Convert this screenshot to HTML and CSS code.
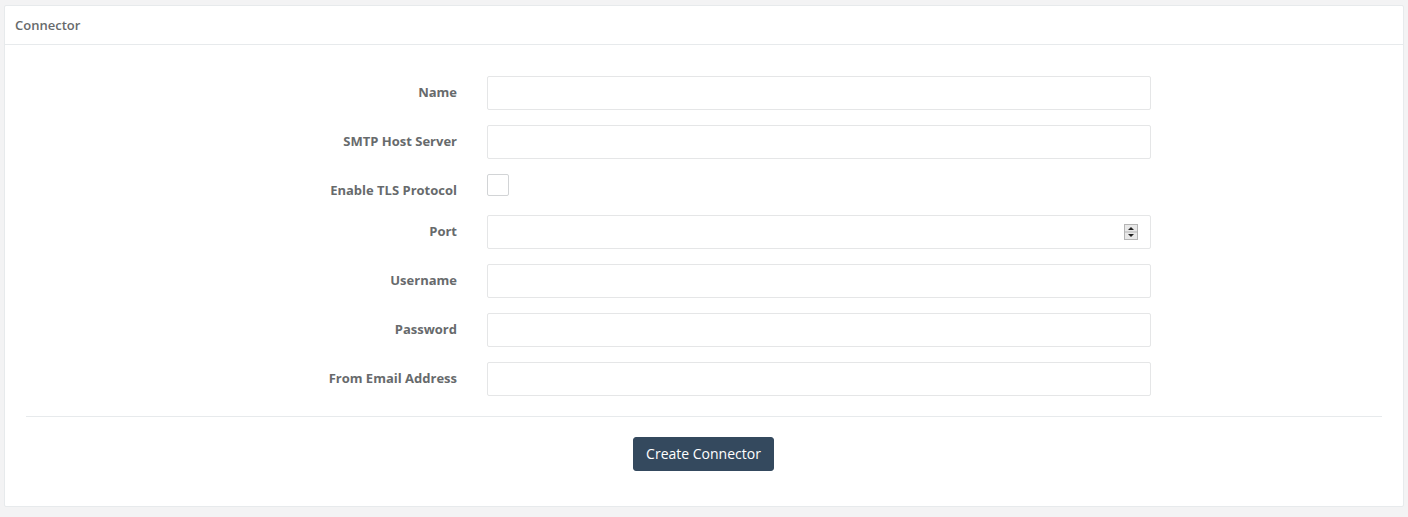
FILE: index.html
```html
<!DOCTYPE html>
<html>
<head>
<meta charset="utf-8">
<link rel="stylesheet" href="styles.css">
</head>
<body>
<div class="panel">
  <div class="panel-heading">Connector</div>
  <div class="panel-body">
    <form class="form">
      <div class="form-group">
        <label class="label">Name</label>
        <div class="field"><input class="input" type="text"></div>
      </div>
      <div class="form-group">
        <label class="label">SMTP Host Server</label>
        <div class="field"><input class="input" type="text"></div>
      </div>
      <div class="form-group checkbox-group">
        <label class="label label-check">Enable TLS Protocol</label>
        <div class="field"><span class="checkbox"></span></div>
      </div>
      <div class="form-group">
        <label class="label">Port</label>
        <div class="field">
          <div class="input input-number">
            <span class="spinner">
              <svg width="14" height="16" viewBox="0 0 14 16">
                <rect x="0.5" y="0.5" width="13" height="15" fill="#e8e8e8" stroke="#b5b5b5"/>
                <line x1="1" y1="8" x2="13" y2="8" stroke="#b5b5b5"/>
                <path d="M4 6 L7 3 L10 6 Z" fill="#222"/>
                <path d="M4 10 L7 13 L10 10 Z" fill="#222"/>
              </svg>
            </span>
          </div>
        </div>
      </div>
      <div class="form-group">
        <label class="label">Username</label>
        <div class="field"><input class="input" type="text"></div>
      </div>
      <div class="form-group">
        <label class="label">Password</label>
        <div class="field"><input class="input" type="password"></div>
      </div>
      <div class="form-group">
        <label class="label">From Email Address</label>
        <div class="field"><input class="input" type="text"></div>
      </div>
      <div class="divider"></div>
      <div class="actions">
        <button type="button" class="btn">Create Connector</button>
      </div>
    </form>
  </div>
</div>
</body>
</html>
```

FILE: styles.css
```css
html, body {
  margin: 0;
  padding: 0;
}
body {
  background: #f3f3f4;
  font-family: "Open Sans", "Liberation Sans", Arial, sans-serif;
  color: #676a6c;
  padding: 5px 4px 0 4px;
  height: 517px;
  box-sizing: border-box;
  overflow: hidden;
}
.panel {
  background: #fff;
  border: 1px solid #e7eaec;
  border-radius: 2px;
  height: 502px;
  box-sizing: border-box;
}
.panel-heading {
  height: 39px;
  box-sizing: border-box;
  border-bottom: 1px solid #e7eaec;
  padding: 10px 10px 0 10px;
  font-size: 13px;
  font-weight: 600;
  line-height: 18px;
  color: #676a6c;
}
.panel-body {
  padding: 31px 21px 20px 20px;
}
.form {
  margin: 0;
}
.form-group {
  display: flex;
  align-items: flex-start;
  margin-bottom: 15px;
}
.label {
  width: 432px;
  padding-right: 30px;
  text-align: right;
  font-size: 13px;
  font-weight: 700;
  line-height: 18px;
  padding-top: 7px;
  flex: none;
  color: #676a6c;
  white-space: nowrap;
}
.label-check {
  padding-top: 7px;
}
.checkbox-group {
  margin-bottom: 16px;
}
.field {
  width: 664px;
  flex: none;
}
.input {
  display: block;
  width: 100%;
  height: 34px;
  box-sizing: border-box;
  border: 1px solid #e5e6e7;
  border-radius: 2px;
  background: #fff;
  margin: 0;
  padding: 6px 12px;
  font-family: inherit;
  font-size: 14px;
  outline: none;
}
.input-number {
  display: flex;
  justify-content: flex-end;
  align-items: center;
  padding-right: 12px;
}
.spinner {
  display: block;
  width: 14px;
  height: 16px;
}
.spinner svg {
  display: block;
}
.checkbox {
  display: block;
  width: 22px;
  height: 22px;
  box-sizing: border-box;
  border: 1px solid #d2d4d6;
  border-radius: 2px;
  background: #fff;
}
.divider {
  height: 1px;
  background: #e7eaec;
  margin: 20px 0 20px 1px;
}
.actions {
  display: flex;
  justify-content: center;
}
.btn {
  background: #34495e;
  border: 1px solid #34495e;
  color: #fff;
  border-radius: 3px;
  padding: 0 12px;
  height: 34px;
  font-family: inherit;
  font-size: 14px;
  line-height: 20px;
  cursor: pointer;
}
```
